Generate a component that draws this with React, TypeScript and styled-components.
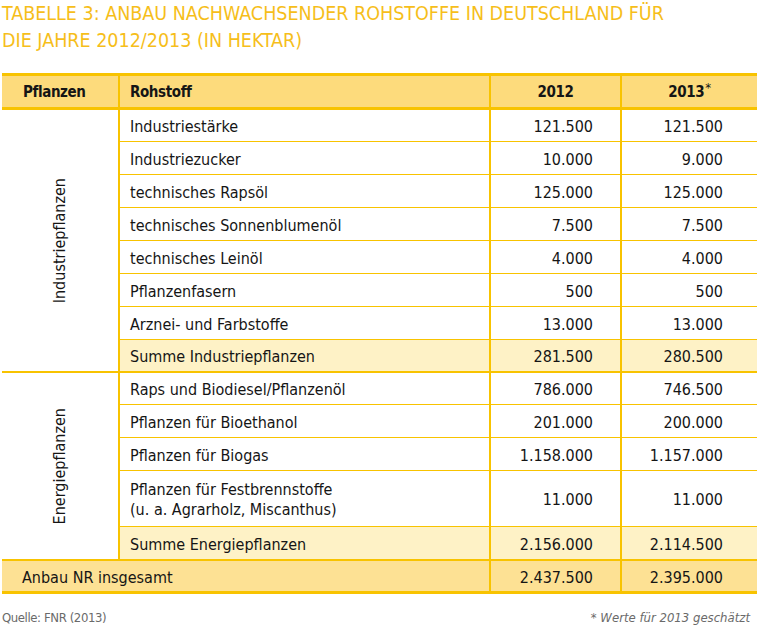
import React from "react"
import styled, { createGlobalStyle } from "styled-components"

const GOLD = "#F8C300"
const HEAD_BG = "#FDDB7C"
const SUM_BG = "#FEF2C6"
const TOTAL_BG = "#FDE194"
const INK = "#151515"

type Row = { name: React.ReactNode; y2012: string; y2013: string; sum?: boolean }

const industrie: Row[] = [
  { name: "Industriestärke", y2012: "121.500", y2013: "121.500" },
  { name: "Industriezucker", y2012: "10.000", y2013: "9.000" },
  { name: "technisches Rapsöl", y2012: "125.000", y2013: "125.000" },
  { name: "technisches Sonnenblumenöl", y2012: "7.500", y2013: "7.500" },
  { name: "technisches Leinöl", y2012: "4.000", y2013: "4.000" },
  { name: "Pflanzenfasern", y2012: "500", y2013: "500" },
  { name: "Arznei- und Farbstoffe", y2012: "13.000", y2013: "13.000" },
  { name: "Summe Industriepflanzen", y2012: "281.500", y2013: "280.500", sum: true },
]

const energie: Row[] = [
  { name: "Raps und Biodiesel/Pflanzenöl", y2012: "786.000", y2013: "746.500" },
  { name: "Pflanzen für Bioethanol", y2012: "201.000", y2013: "200.000" },
  { name: "Pflanzen für Biogas", y2012: "1.158.000", y2013: "1.157.000" },
  {
    name: (
      <>
        Pflanzen für Festbrennstoffe
        <br />
        (u. a. Agrarholz, Miscanthus)
      </>
    ),
    y2012: "11.000",
    y2013: "11.000",
  },
  { name: "Summe Energiepflanzen", y2012: "2.156.000", y2013: "2.114.500", sum: true },
]

const GlobalStyle = createGlobalStyle`
  html, body {
    margin: 0;
    padding: 0;
    background: #fff;
  }
  body {
    font-family: "DejaVu Sans Condensed", "Liberation Sans", Arial, sans-serif;
    font-stretch: condensed;
    color: ${INK};
  }
`

const Page = styled.div`
  width: 755px;
  padding: 0 2px;
`

const Title = styled.h1`
  margin: 0 0 19px;
  font-size: 19.5px;
  line-height: 27px;
  font-weight: normal;
  color: #F6BE1A;
`

const Table = styled.div`
  background: ${GOLD};
  padding: 3px 0;
  display: flex;
  flex-direction: column;
`

const Section = styled.div<{ $rows: string; $gapBelow: number }>`
  display: grid;
  grid-template-columns: 116px 369px 129px 1fr;
  grid-template-rows: ${p => p.$rows};
  column-gap: 2px;
  row-gap: 1px;
  margin-bottom: ${p => p.$gapBelow}px;
`

const Cell = styled.div<{ $bg?: string; $pl?: number }>`
  background: ${p => p.$bg || "#fff"};
  display: flex;
  align-items: center;
  padding-left: ${p => p.$pl ?? 10}px;
  padding-top: 3px;
  font-size: 16px;
  line-height: 20px;
  white-space: nowrap;
`

const HeadCell = styled(Cell)<{ $center?: boolean }>`
  font-weight: bold;
  font-size: 15px;
  letter-spacing: -0.4px;
  padding-top: 1px;
  justify-content: ${p => (p.$center ? "center" : "flex-start")};
  padding-left: ${p => (p.$center ? 0 : p.$pl ?? 10)}px;
`

const NumCell = styled(Cell)<{ $pr: number }>`
  justify-content: flex-end;
  padding-left: 0;
  padding-right: ${p => p.$pr}px;
`

const WideCell = styled(Cell)`
  grid-column: span 2;
`

const GroupCell = styled.div<{ $span: number }>`
  grid-row: span ${p => p.$span};
  background: #fff;
  display: flex;
  align-items: center;
  justify-content: center;
`

const Vertical = styled.span`
  writing-mode: vertical-rl;
  transform: rotate(180deg);
  font-size: 16px;
  line-height: 20px;
`

const Star = styled.span`
  font-weight: normal;
  font-size: 13px;
  position: relative;
  top: -4px;
  margin-left: 1px;
`

const Footer = styled.div`
  display: flex;
  justify-content: space-between;
  margin-top: 16px;
  padding-right: 7px;
  font-size: 13px;
  line-height: 16px;
  color: #6a6a6a;
`

const Source = styled.span`
  letter-spacing: -0.4px;
`

const Note = styled.span`
  font-style: italic;
`

const DataRows = ({ rows }: { rows: Row[] }) => (
  <>
    {rows.map((r, i) => {
      const bg = r.sum ? SUM_BG : "#fff"
      return (
        <React.Fragment key={i}>
          <Cell $bg={bg}>{r.name}</Cell>
          <NumCell $bg={bg} $pr={27}>{r.y2012}</NumCell>
          <NumCell $bg={bg} $pr={34}>{r.y2013}</NumCell>
        </React.Fragment>
      )
    })}
  </>
)

export default function App() {
  return (
    <Page>
      <GlobalStyle />
      <Title>
        TABELLE 3: ANBAU NACHWACHSENDER ROHSTOFFE IN DEUTSCHLAND FÜR
        <br />
        DIE JAHRE 2012/2013 (IN HEKTAR)
      </Title>

      <Table>
        <Section $rows="31px" $gapBelow={3}>
          <HeadCell $bg={HEAD_BG} $pl={21}>Pflanzen</HeadCell>
          <HeadCell $bg={HEAD_BG}>Rohstoff</HeadCell>
          <HeadCell $bg={HEAD_BG} $center>2012</HeadCell>
          <HeadCell $bg={HEAD_BG} $center>
            2013<Star>*</Star>
          </HeadCell>
        </Section>

        <Section $rows="31px repeat(6, 32px) 31px" $gapBelow={2}>
          <GroupCell $span={8}>
            <Vertical>Industriepflanzen</Vertical>
          </GroupCell>
          <DataRows rows={industrie} />
        </Section>

        <Section $rows="31px 32px 32px 55px 32px" $gapBelow={2}>
          <GroupCell $span={5}>
            <Vertical>Energiepflanzen</Vertical>
          </GroupCell>
          <DataRows rows={energie} />
        </Section>

        <Section $rows="30px" $gapBelow={0}>
          <WideCell $bg={TOTAL_BG} $pl={20}>Anbau NR insgesamt</WideCell>
          <NumCell $bg={TOTAL_BG} $pr={27}>2.437.500</NumCell>
          <NumCell $bg={TOTAL_BG} $pr={34}>2.395.000</NumCell>
        </Section>
      </Table>

      <Footer>
        <Source>Quelle: FNR (2013)</Source>
        <Note>* Werte für 2013 geschätzt</Note>
      </Footer>
    </Page>
  )
}
